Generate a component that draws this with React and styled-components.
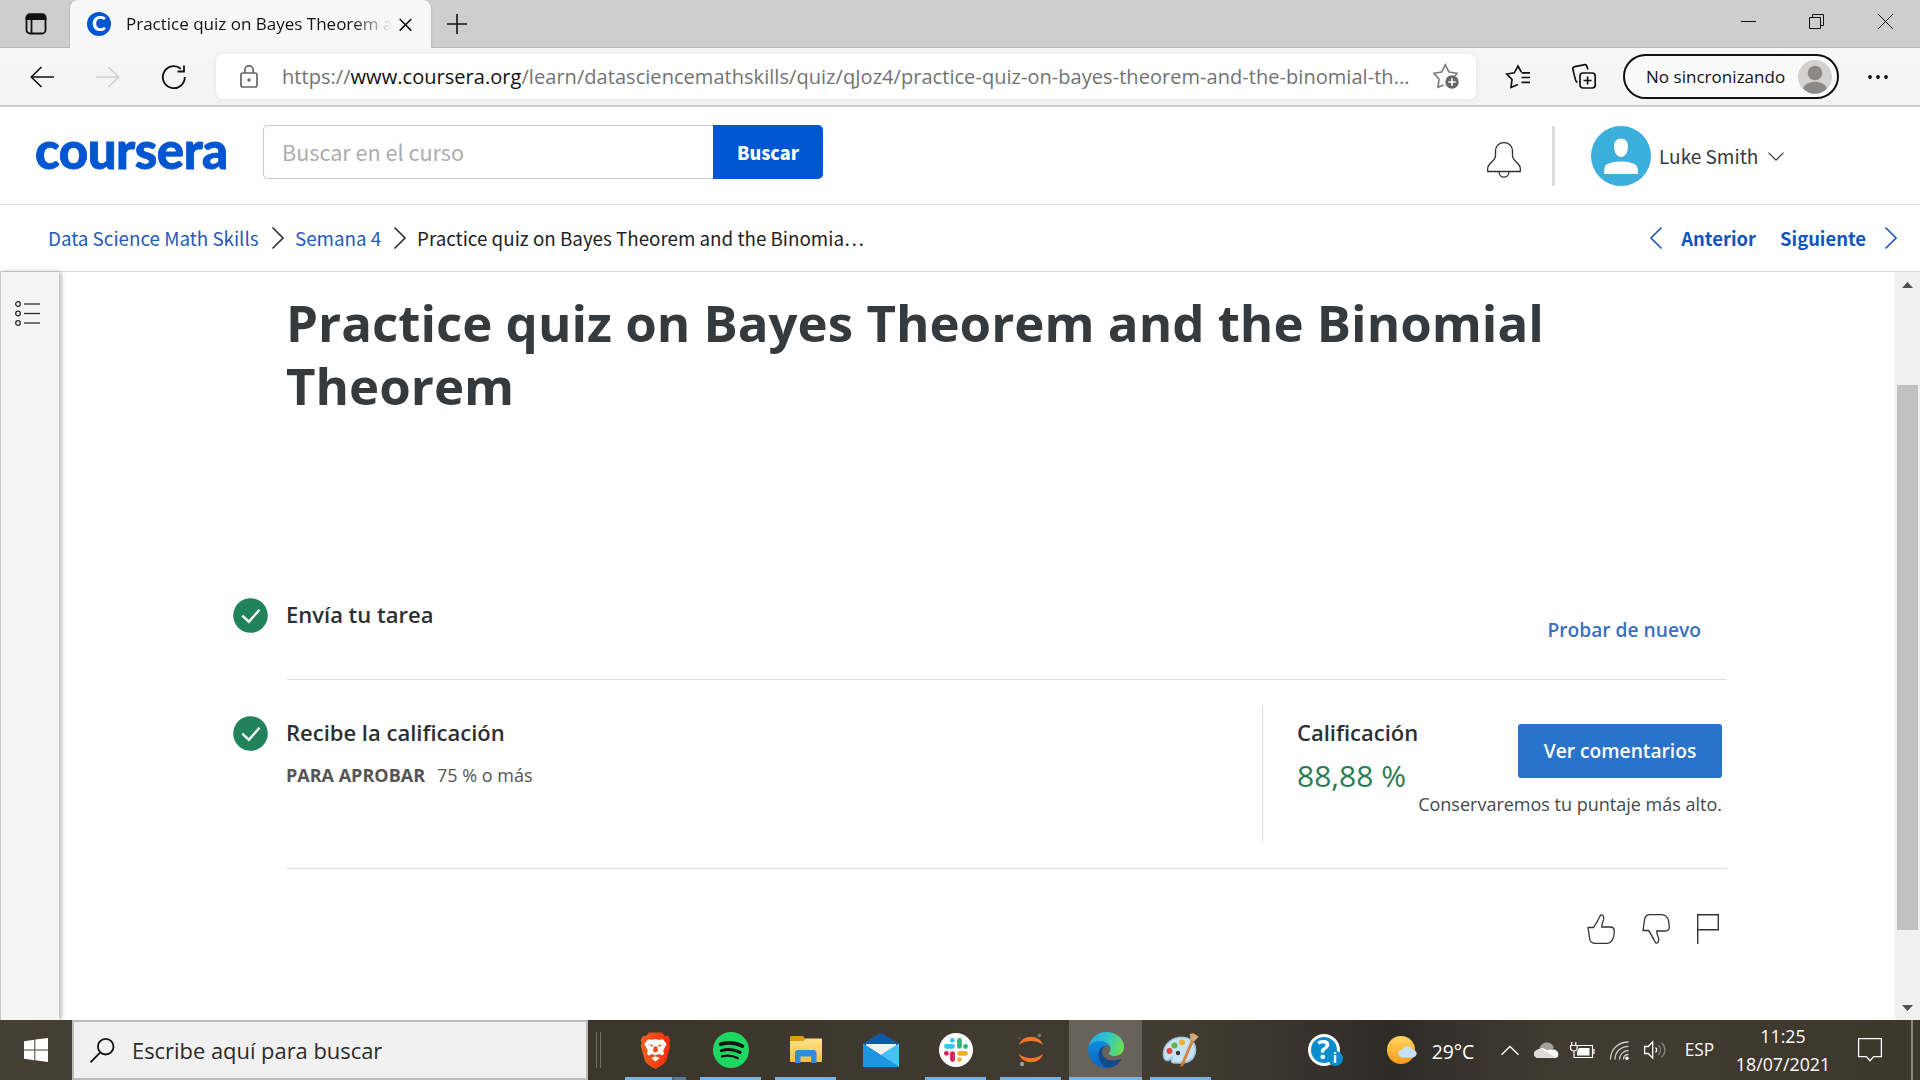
import React from "react";
import styled, { createGlobalStyle } from "styled-components";

const Global = createGlobalStyle`
  * { box-sizing: border-box; }
  html, body { margin: 0; padding: 0; overflow: hidden; background: #fff; }
  button { border: 0; background: none; padding: 0; font: inherit; color: inherit; }
`;

const ui = "'Open Sans', 'Noto Sans', sans-serif";
const source = "'Noto Sans CJK SC', 'Noto Sans', sans-serif";

const Screen = styled.div`
  width: 1920px;
  height: 1080px;
  display: flex;
  flex-direction: column;
  font-family: ${ui};
  white-space: nowrap;
  overflow: hidden;
`;

const Icon = styled.svg`
  display: block;
  flex: none;
  width: ${(p) => p.$w}px;
  height: ${(p) => p.$h || p.$w}px;
  fill: none;
  stroke: ${(p) => p.$c || "#1b1b1b"};
  stroke-width: ${(p) => p.$s || 1.6};
  overflow: visible;
`;

/* ---------- browser chrome ---------- */

const TabStrip = styled.div`
  flex: none;
  height: 48px;
  display: flex;
  background: #cecece;
  box-shadow: inset 0 -1px 0 #b8b8b8;
`;

const TabMenu = styled.button`
  width: 70px;
  padding-left: 2px;
  display: flex;
  align-items: center;
  justify-content: center;
`;

const Tab = styled.div`
  position: relative;
  width: 361px;
  height: 48px;
  padding-left: 17px;
  display: flex;
  align-items: center;
  background: #f7f7f7;
  border-radius: 8px 8px 0 0;
  box-shadow: 0 0 2px rgba(0, 0, 0, 0.25);
  clip-path: inset(-4px -4px 0 -4px);
`;

const Favicon = styled.span`
  flex: none;
  width: 24px;
  height: 24px;
  border-radius: 50%;
  background: #0056d2;
  color: #fff;
  font: 900 21px/22px Lato, sans-serif;
  text-align: center;
`;

const TabTitle = styled.span`
  width: 266px;
  margin-left: 15px;
  font-size: 17px;
  line-height: 24px;
  color: #111;
  mask-image: linear-gradient(to right, #000 226px, transparent 266px);
`;

const TabClose = styled.button`
  margin-left: 7px;
`;

const NewTab = styled.button`
  width: 52px;
  display: flex;
  align-items: center;
  justify-content: center;
`;

const WindowControls = styled.div`
  margin-left: auto;
  width: 206px;
  height: 43px;
  display: grid;
  grid-template-columns: repeat(3, 1fr);
  place-items: center;
`;

const Toolbar = styled.div`
  flex: none;
  height: 59px;
  padding: 0 3px 0 9px;
  display: flex;
  align-items: center;
  background: linear-gradient(#f7f7f7, #f3f3f3);
  border-bottom: 2px solid #cccccc;
`;

const ToolButton = styled.button`
  flex: none;
  width: ${(p) => p.$w || 66}px;
  height: 45px;
  display: flex;
  align-items: center;
  justify-content: center;
`;

const AddressBar = styled.div`
  flex: none;
  width: 1260px;
  height: 45px;
  margin: 0 9px;
  padding: 0 17px 0 24px;
  display: flex;
  align-items: center;
  background: #fff;
  border-radius: 7px;
  box-shadow: 0 0 7px rgba(0, 0, 0, 0.07);
`;

const Url = styled.span`
  flex: 1;
  margin-left: 24px;
  font-size: 20px;
  letter-spacing: 0.045px;
  color: #737373;
  b { font-weight: 400; color: #111; }
`;

const Profile = styled.button`
  flex: none;
  width: 216px;
  height: 45px;
  margin-left: 6px;
  padding: 0 5px 0 21px;
  display: flex;
  align-items: center;
  justify-content: space-between;
  border: 2px solid #111;
  border-radius: 23px;
  background: #fafafa;
  font-size: 17px;
  letter-spacing: 0.03px;
  color: #111;
`;

/* ---------- site header ---------- */

const Header = styled.header`
  flex: none;
  height: 98px;
  padding: 18px 136px 0 36px;
  display: flex;
  align-items: flex-start;
  background: #fff;
  border-bottom: 1px solid #dcdcdc;
  font-family: ${source};
`;

const Logo = styled.div`
  width: 227px;
  margin-left: -1px;
  padding-top: 1px;
  font: 900 51px/48px Lato, sans-serif;
  letter-spacing: -0.5px;
  -webkit-text-stroke: 0.8px #0056d2;
  color: #0056d2;
`;

const SearchForm = styled.div`
  display: flex;
  margin-left: 1px;
  height: 54px;
`;

const SearchInput = styled.div`
  width: 450px;
  padding-left: 18px;
  border: 1px solid #c9c9c9;
  border-right: 0;
  border-radius: 5px 0 0 5px;
  font-size: 21.6px;
  line-height: 52px;
  color: #adadad;
`;

const SearchButton = styled.button`
  width: 110px;
  border-radius: 0 5px 5px 0;
  background: #0056d2;
  color: #fff;
  font: 900 18px/52px ${source};
`;

const Account = styled.div`
  margin-left: auto;
  display: flex;
  align-items: center;
  height: 62px;
  font-size: 19px;
  color: #373a3c;
`;

const Rule = styled.span`
  width: 3px;
  height: 60px;
  margin: 0 36px 0 31px;
  background: #dedede;
`;

const UserName = styled.span`
  width: 109px;
  margin-left: 8px;
  padding-bottom: 2px;
`;

const Crumbs = styled.nav`
  flex: none;
  height: 67px;
  padding: 0 23px 1px 48px;
  display: flex;
  align-items: center;
  border-bottom: 1px solid #dcdcdc;
  font-family: ${source};
  font-size: 18.8px;
  color: #1f1f1f;
`;

const Crumb = styled.span`
  width: ${(p) => p.$w}px;
  line-height: 26px;
  color: ${(p) => (p.$link ? "#1f5bbd" : "#1f1f1f")};
`;

const CrumbArrow = styled.span`
  padding: 1px 11px 0 13px;
`;

const Pager = styled.div`
  margin-left: auto;
  display: flex;
  align-items: center;
  font-size: 18.4px;
  font-weight: 700;
  color: #0f55c0;
  svg { margin-top: 1px; }
`;

const PagerLink = styled.a`
  margin: 0 ${(p) => p.$r}px 0 ${(p) => p.$l}px;
  line-height: 26px;
`;

/* ---------- page body ---------- */

const Body = styled.div`
  flex: 1;
  min-height: 0;
  display: flex;
`;

const Sidebar = styled.aside`
  flex: none;
  width: 59px;
  padding: 29px 0 0 14px;
  border-left: 1px solid #c8c8c8;
  background: #f5f5f5;
  box-shadow: 2px 0 5px rgba(0, 0, 0, 0.32);
`;

const Main = styled.main`
  flex: 1;
  padding: 19px 168px 0 228px;
  color: #373a3c;
`;

const Title = styled.h1`
  margin: 0 0 0 -1px;
  font-size: 51px;
  line-height: 63px;
  font-weight: 700;
  letter-spacing: 0.01px;
  white-space: normal;
  width: 1400px;
  color: #373a3c;
`;

const Step = styled.section`
  height: ${(p) => p.$h}px;
  padding-top: ${(p) => p.$top}px;
  display: flex;
  border-bottom: 1px solid #dedede;
`;

const StepMark = styled.span`
  flex: none;
  margin: ${(p) => p.$top}px 0 0 -54px;
  width: 53px;
`;

const StepHead = styled.div`
  padding-top: ${(p) => p.$drop || 0}px;
  font-size: 22px;
  line-height: 40px;
  font-weight: 600;
  color: #2d3033;
`;

const StepBody = styled.div`
  flex: 1;
`;

const Passing = styled.div`
  display: flex;
  gap: 12px;
  margin-top: 13px;
  font-size: 18px;
  line-height: 20px;
  color: #555;
`;

const Retry = styled.a`
  margin: 22px 26px 0 0;
  height: 28px;
  font-size: 19.2px;
  line-height: 28px;
  font-weight: 600;
  color: #3a70c0;
`;

const Result = styled.div`
  width: 465px;
  height: 135px;
  padding: 6px 5px 0 34px;
  display: flex;
  justify-content: space-between;
  border-left: 1px solid #d8d8d8;
`;

const Grade = styled.div`
  width: 120px;
`;

const Score = styled.div`
  padding-top: 2px;
  font-size: 30px;
  line-height: 44px;
  color: #2b7d55;
`;

const Actions = styled.div`
  display: flex;
  flex-direction: column;
  align-items: flex-end;
  padding-top: 12px;
`;

const Primary = styled.button`
  width: 204px;
  height: 54px;
  padding-bottom: 2px;
  border-radius: 3px;
  background: #2a73cc;
  color: #fff;
  font-size: 19.2px;
  font-weight: 600;
`;

const Note = styled.div`
  width: 304px;
  margin-top: 12px;
  text-align: right;
  font-size: 18px;
  line-height: 28px;
  color: #45484b;
`;

const Feedback = styled.div`
  display: flex;
  justify-content: flex-end;
  gap: 27px;
  padding: 45px 8px 0 0;
`;

const Scrollbar = styled.div`
  flex: none;
  width: 25px;
  padding: 10px 2px 9px;
  display: flex;
  flex-direction: column;
  align-items: center;
  background: #f0f0f0;
`;

const Thumb = styled.div`
  width: 21px;
  height: 545px;
  margin: 97px 0 auto;
  background: #c1c1c1;
`;

/* ---------- taskbar ---------- */

const Taskbar = styled.footer`
  flex: none;
  height: 60px;
  display: flex;
  color: #fff;
  background: linear-gradient(90deg, #463f34 0, #3b352c 620px, #423c31 1180px, #2f2c28 1390px, #413b31 1560px, #3d372c 1920px);
`;

const Start = styled.button`
  width: 72px;
  display: flex;
  align-items: center;
  justify-content: center;
`;

const TaskSearch = styled.div`
  width: 516px;
  padding: 0 0 0 16px;
  display: flex;
  align-items: center;
  gap: 17px;
  border: 2px solid #bcbcbc;
  background: #f1f1f1;
  color: #2b2b2b;
  font-size: 21.9px;
  span { padding-top: 1px; }
`;

const Grip = styled.div`
  width: 31px;
  display: flex;
  align-items: center;
  gap: 3px;
  padding-left: 8px;
`;

const GripLine = styled.i`
  width: 1px;
  height: 36px;
  background: #746e66;
`;

const Apps = styled.div`
  display: flex;
  gap: 2px;
`;

const AppButton = styled.button`
  width: 73px;
  height: 60px;
  display: flex;
  flex-direction: column;
  align-items: center;
  background: ${(p) => (p.$active ? "#68625b" : "transparent")};
`;

const AppGlyph = styled.span`
  flex: 1;
  display: flex;
  align-items: center;
  padding-top: 3px;
`;

const Underline = styled.i`
  width: ${(p) => (p.$active ? 73 : 61)}px;
  height: 3px;
  background: ${(p) =>
    p.$split
      ? "linear-gradient(90deg, #7ab4e2 47px, #4a6a84 47px, #4a6a84 49px, #567b98 49px)"
      : p.$idle ? "transparent" : "#7ab4e2"};
`;

const Tray = styled.div`
  margin-left: auto;
  width: 631px;
  display: flex;
  align-items: center;
`;

const TrayItem = styled.div`
  flex: none;
  width: ${(p) => p.$w}px;
  margin-left: ${(p) => p.$gap || 0}px;
  padding-top: ${(p) => p.$drop || 0}px;
  display: flex;
  justify-content: center;
  text-align: center;
  font-size: ${(p) => p.$size || 17.3}px;
  line-height: 28px;
`;

const Clock = styled(TrayItem)`
  flex-direction: column;
  font-size: 17.8px;
`;

const DesktopEdge = styled.i`
  width: 2px;
  height: 60px;
  margin-left: 10px;
  background: #8c877f;
`;

const Check = () => (
  <Icon $w={35} viewBox="0 0 35 35" $c="none">
    <circle cx="17.5" cy="17.5" r="17.3" fill="#21835a" />
    <path d="M9.3 17.6l6.6 6.2L26.5 11.8" stroke="#fff" strokeWidth="2.4" />
  </Icon>
);

const thumbPath = "M1 13.5h5.5C9 10 11 6 13.3 1.6c.6-1.1 2.2-.8 3 .5.9 1.5.5 3.500-.3 5.500-.8 2-1.300 3.400-1.300 5.400h8.300c2.500 0 4.300 1.700 4.300 4 0 7.500-2.600 11.800-7 12.400H8.500C5 29.400 3 28 2.600 24.500z";

const bars = (y) => (
  <g key={y}>
    <circle cx="3" cy={y} r="2.300" />
    <path d={`M9 ${y}H25`} />
  </g>
);

const Brave = () => (
  <Icon $w={31} $h={37} viewBox="0 0 31 37" $c="none">
    <defs>
      <linearGradient id="brave"><stop offset="0" stopColor="#f1601f" /><stop offset="1" stopColor="#fb2a08" /></linearGradient>
    </defs>
    <path d="M9 0.500h13l3 3.500 3-.3 2.300 4.300-1 3 .9 3-4 14.500c-1 3-6 6-10.700 8.500C10.800 34.500 5.800 31.500 4.800 28.500L.8 14l.9-3-1-3L3 3.700l3 .3z" fill="url(#brave)" />
    <path d="M8 7.200l4 .6 3.500-.8 3.500.8 4-.6 3.600 4.800-3.400 6.500.9 3-1.900 2-3.200-1.500-3.500 1.500-3.500-1.500L8.800 23.500l-1.900-2 .9-3L4.400 12z" fill="#fff" />
    <path d="M8.500 12.300l4.500.7-.8 1.900zM22.500 12.300L18 13l.8 1.900zM14 14.500l-1.200 4.500 2.700 1.600 2.700-1.600-1.200-4.500z" fill="#f44a16" />
    <path d="M11.200 26l4.300-1.800 4.300 1.800-4.300 3.400z" fill="#fff" />
  </Icon>
);

const Spotify = () => (
  <Icon $w={36} viewBox="0 0 36 36" $c="#111">
    <circle cx="18" cy="18" r="18" fill="#1ed760" stroke="none" />
    <g strokeLinecap="round">
      <path d="M7.500 12.200c8-2.200 15.500-1.500 22 2" strokeWidth="3.600" />
      <path d="M8.300 18.600c6.800-1.900 13-1.200 18.800 1.800" strokeWidth="3" />
      <path d="M9 24.400c5.800-1.400 11-.8 15.700 1.700" strokeWidth="2.400" />
    </g>
  </Icon>
);

const Folder = () => (
  <Icon $w={32} $h={28} viewBox="0 0 32 28" $c="none">
    <defs>
      <linearGradient id="folder" x2="0" y2="1"><stop offset="0" stopColor="#ffe08a" /><stop offset="1" stopColor="#f5c242" /></linearGradient>
    </defs>
    <path d="M0 1.500C0 .6.600 0 1.500 0H13l2.500 3H31v8H0z" fill="#d9a012" />
    <path d="M0 5h13l3-2.500h15c.6 0 1 .4 1 1V25c0 .6-.4 1-1 1H1c-.6 0-1-.4-1-1z" fill="url(#folder)" />
    <path d="M5 27V17c0-1.600 1-3 3-3h15.500c2 0 3 1.400 3 3v10H21v-6.500H10.500V27z" fill="#2f8fdc" />
  </Icon>
);

const Mail = () => (
  <Icon $w={36} $h={34} viewBox="0 0 36 34" $c="none">
    <path d="M0 10.500L15.500 1c1.600-1 3.400-1 5 0L36 10.500V14H0z" fill="#0f5aa8" />
    <path d="M3 11h30v13H3z" fill="#f1f1f1" />
    <path d="M0 10.500L18 22 36 10.500V34H0z" fill="#1d93e0" />
    <path d="M36 10.500V34L18 22z" fill="#45c3f5" />
    <path d="M0 10.500L36 34H0z" fill="#1c95e2" />
  </Icon>
);

const Slack = () => (
  <Icon $w={34} viewBox="0 0 34 34" $c="none">
    <circle cx="17" cy="17" r="17" fill="#fff" />
    <g strokeLinecap="round" strokeWidth="4.800">
      <path d="M13.300 7.300v.01" stroke="#36c5f0" /><path d="M7.500 13.300h6" stroke="#36c5f0" />
      <path d="M20.500 7.300v6" stroke="#2eb67d" /><path d="M26.500 13.500v.01" stroke="#2eb67d" />
      <path d="M26.500 20.300h-6" stroke="#ecb22e" /><path d="M20.500 26.600v.01" stroke="#ecb22e" />
      <path d="M13.500 26.600v-6" stroke="#e01e5a" /><path d="M7.400 20.300v.01" stroke="#e01e5a" />
    </g>
  </Icon>
);

const Jupyter = () => (
  <Icon $w={26} $h={34} viewBox="0 0 26 34" $c="none">
    <path d="M1 12C4 1 22 1 25 12 19 6.500 7 6.500 1 12zM1 21c3 11 21 11 24 0-6 5.500-18 5.500-24 0z" fill="#f37726" />
    <circle cx="21.500" cy="2.500" r="1.800" fill="#767677" />
    <circle cx="1.500" cy="5.300" r="1.100" fill="#616262" />
    <circle cx="4" cy="31" r="2.200" fill="#9e9e9e" />
  </Icon>
);

const Edge = () => (
  <Icon $w={36} viewBox="0 0 36 36" $c="none">
    <defs>
      <linearGradient id="edgeTop" x1="0" y1="0.3" x2="1" y2="0.5"><stop offset="0" stopColor="#2aa6e6" /><stop offset=".5" stopColor="#2fc4cf" /><stop offset="1" stopColor="#6be04c" /></linearGradient>
      <linearGradient id="edgeLow" x2="0" y2="1"><stop offset="0" stopColor="#0d8ee0" /><stop offset="1" stopColor="#0c62bd" /></linearGradient>
    </defs>
    <path d="M0.500 15.500C2 6 9 0 18.500 0 29 0 36 7 36 15c0 5.500-4 9-9 9-3.500 0-6-1.200-6-2.800 0-1 1.500-1.700 1.500-4.200 0-4-5-8-10-8-6 0-10.500 3-12 6.500z" fill="url(#edgeTop)" />
    <path d="M0.300 16C2 11 7 9 12 9c6 0 10.300 4 10.300 8 0-2-2-3.500-4-3.500-4 0-7 4.500-7 9.500 0 6 4.500 11 10 12.500-1 .3-2.200.5-3.500.5C8 36-.7 27 .3 16z" fill="url(#edgeLow)" />
    <path d="M18 14c-2.500 0-4 3-4 6 0 5 5 8.500 11 8.500 4 0 6.500-1.500 7.500-1.800.8-.2 1 .4.700 1C31 32 26 35.500 21 35.500c-5.500 0-10.500-6-10.500-12.500 0-4.500 3-9.500 7.500-9z" fill="#114a8b" />
  </Icon>
);

const Paint = () => (
  <Icon $w={36} $h={36} viewBox="0 0 36 36" $c="none">
    <path d="M16 5.500c9-1.500 16.500 3.500 16.500 12C32.500 26 27 31 18 31c-4 0-7 0-8.500-.5-1.500-.6-1-3-.5-5-2 .2-1.500 3-4.500 3C1.500 28.500.500 25 .5 22 .5 13 7 7 16 5.500z" fill="#c6e2f5" stroke="#9fc4de" />
    <circle cx="6.500" cy="19" r="3" fill="#e0453c" /><circle cx="11.500" cy="13.500" r="3" fill="#65b548" />
    <circle cx="19" cy="10.500" r="3" fill="#f3b12f" /><circle cx="15" cy="21" r="2.200" fill="#34383c" />
    <path d="M28.500 8L30.500 9 19.500 34.500 17.500 34z" fill="#e88b34" stroke="#b5642a" strokeWidth=".6" />
    <path d="M26.500 2l4-.8 3 2 2.200 1.500L31 9.500l-3-1.300z" fill="#d3a874" />
  </Icon>
);

const apps = [
  { id: "brave", Glyph: Brave, split: true },
  { id: "spotify", Glyph: Spotify },
  { id: "explorer", Glyph: Folder },
  { id: "mail", Glyph: Mail, idle: true },
  { id: "slack", Glyph: Slack },
  { id: "jupyter", Glyph: Jupyter },
  { id: "edge", Glyph: Edge, active: true },
  { id: "paint", Glyph: Paint },
];

function Browser() {
  return (
    <>
      <TabStrip>
        <TabMenu>
          <Icon $w={22} $h={22} viewBox="0 0 22 22" $c="#111" $s={1.8}>
            <rect x="1.500" y="1.500" width="19" height="19" rx="3.500" />
            <path d="M1.500 6V4.500a3 3 0 013-3h13a3 3 0 013 3V6z" fill="#111" />
            <path d="M6.500 6v14" />
          </Icon>
        </TabMenu>
        <Tab>
          <Favicon>C</Favicon>
          <TabTitle>Practice quiz on Bayes Theorem a</TabTitle>
          <TabClose>
            <Icon $w={13} viewBox="0 0 13 13" $c="#111"><path d="M.7 1l11.600 11.600M12.300 1L.7 12.600" /></Icon>
          </TabClose>
        </Tab>
        <NewTab>
          <Icon $w={20} viewBox="0 0 20 20" $c="#111"><path d="M10 0v20M0 10h20" /></Icon>
        </NewTab>
        <WindowControls>
          <Icon $w={15} viewBox="0 0 15 15" $c="#111" $s={1}><path d="M0 7.500h15" /></Icon>
          <Icon $w={15} viewBox="0 0 15 15" $c="#111" $s={1}><path d="M.5 3.500h11v11H.5zM3.500 3.500v-3h11v11h-3" /></Icon>
          <Icon $w={15} viewBox="0 0 15 15" $c="#111" $s={1}><path d="M0 0l15 15M15 0L0 15" /></Icon>
        </WindowControls>
      </TabStrip>
      <Toolbar>
        <ToolButton>
          <Icon $w={24} $h={22} viewBox="0 0 24 22" $c="#111"><path d="M24 11H1.500M11.500 1L1.300 11l10.200 10" /></Icon>
        </ToolButton>
        <ToolButton>
          <Icon $w={24} $h={22} viewBox="0 0 24 22" $c="#d0d0d0"><path d="M0 11h22.500M12.500 1l10.200 10-10.200 10" /></Icon>
        </ToolButton>
        <ToolButton>
          <Icon $w={24} $h={24} viewBox="0 0 24 24" $c="#111" $s={1.8}><path d="M22.800 12A11 11 0 1 1 18.800 3.700M22 0.500v6h-6.500" /></Icon>
        </ToolButton>
        <AddressBar>
          <Icon $w={18} $h={23} viewBox="0 0 18 23" $c="#666" $s={1.700}>
            <rect x="1" y="8" width="16" height="14" rx="2" /><path d="M4.800 8V5a4.200 4.200 0 018.400 0v3" /><circle cx="9" cy="15" r=".8" fill="#666" />
          </Icon>
          <Url>https://<b>www.coursera.org</b>/learn/datasciencemathskills/quiz/qJoz4/practice-quiz-on-bayes-theorem-and-the-binomial-th...</Url>
          <Icon $w={26} $h={25} viewBox="0 0 26 25" $c="#777">
            <path d="M10.500 21L5 23.300 6 15 1 9.300 8.700 8 12.300.8 16 8l8 1.300-2 2.500" />
            <circle cx="19" cy="18" r="6.700" fill="#666" stroke="none" /><path d="M19 14.300v7.400M15.300 18h7.400" stroke="#fff" strokeWidth="1.700" />
          </Icon>
        </AddressBar>
        <ToolButton>
          <Icon $w={24} $h={23} viewBox="0 0 24 23" $c="#111" $s={1.700}>
            <path d="M12 19.500L5 22.500 6 14.500 .8 9 8.300 7.800 12 1l3.300 6M15.500 7.800H24M15.500 12.500H24M15.500 17.300H24" />
          </Icon>
        </ToolButton>
        <ToolButton>
          <Icon $w={24} $h={25} viewBox="0 0 24 25" $c="#111" $s={1.700}>
            <rect x="8" y="9" width="15.200" height="15" rx="3" /><path d="M15.600 12.500v8M11.600 16.500h8M5.500 18.500c-1.200-.6-1.700-1.500-2-2.600L.9 5.600c-.3-1.300.3-2.500 1.600-2.900L12 .8c1.400-.3 2.600.4 3 1.700l.8 3" />
          </Icon>
        </ToolButton>
        <Profile>
          No sincronizando
          <Icon $w={34} viewBox="0 0 34 34" $c="none">
            <circle cx="17" cy="17" r="17" fill="#d3d2d0" /><circle cx="17" cy="13" r="7.300" fill="#8b8988" />
            <path d="M5 28.500C8 19.500 26 19.500 29 28.500 22 35.500 12 35.500 5 28.500z" fill="#8b8988" />
          </Icon>
        </Profile>
        <ToolButton $w={78}>
          <Icon $w={20} $h={4} viewBox="0 0 20 4" $c="none">
            <g fill="#111"><circle cx="2" cy="2" r="1.900" /><circle cx="10" cy="2" r="1.900" /><circle cx="18" cy="2" r="1.900" /></g>
          </Icon>
        </ToolButton>
      </Toolbar>
    </>
  );
}

function SiteHeader() {
  const chevron = (dir, c) => (
    <Icon $w={12} $h={22} viewBox="0 0 12 22" $c={c} $s={1.700}>
      <path d={dir === "left" ? "M11.500.5L1 11l10.500 10.500" : "M.5.5L11 11 .5 21.500"} />
    </Icon>
  );
  return (
    <>
      <Header>
        <Logo>coursera</Logo>
        <SearchForm>
          <SearchInput>Buscar en el curso</SearchInput>
          <SearchButton>Buscar</SearchButton>
        </SearchForm>
        <Account>
          <Icon $w={34} $h={36} viewBox="0 0 34 36" $c="#333" $s={1.300} transform="translate(0 4)">
            <path d="M17 .7c5 0 8.500 3.500 8.500 8v5c0 5 7.800 8 7.800 12.500v3.300H.7v-3.300c0-4.500 7.800-7.500 7.800-12.500v-5c0-4.500 3.500-8 8.500-8zM12 29.500c0 7.500 10 7.500 10 0" />
          </Icon>
          <Rule />
          <Icon $w={60} viewBox="0 0 60 60" $c="none">
            <circle cx="30" cy="30" r="30" fill="#3baedb" />
            <path d="M30 12.500c4.500 0 7 3 7 8 0 6-3 10.500-7 10.500s-7-4.500-7-10.500c0-5 2.500-8 7-8zM13 48c.2-4 .5-6.500 1.500-8.500C17 37 24 35.500 30 35.500s13 1.500 15.500 4c1 2 1.500 4.500 1.700 8.500z" fill="#fff" />
          </Icon>
          <UserName>Luke Smith</UserName>
          <Icon $w={16} $h={9} viewBox="0 0 16 9" $c="#333" $s={1.200}><path d="M.5.7L8 8.200 15.500.7" /></Icon>
        </Account>
      </Header>
      <Crumbs>
        <Crumb $link $w={211}>Data Science Math Skills</Crumb>
        <CrumbArrow>{chevron("right", "#333")}</CrumbArrow>
        <Crumb $link $w={86}>Semana 4</Crumb>
        <CrumbArrow>{chevron("right", "#333")}</CrumbArrow>
        <Crumb $w={450}>Practice quiz on Bayes Theorem and the Binomia…</Crumb>
        <Pager>
          {chevron("left", "#1f5bbd")}
          <PagerLink $l={19} $r={12}>Anterior</PagerLink>
          <PagerLink $l={12} $r={19}>Siguiente</PagerLink>
          {chevron("right", "#1f5bbd")}
        </Pager>
      </Crumbs>
    </>
  );
}

function Quiz() {
  return (
    <Body>
      <Sidebar>
        <Icon $w={26} $h={26} viewBox="0 0 26 26" $c="#2b2b2b" $s={1.300}>{[3, 12.500, 22].map(bars)}</Icon>
      </Sidebar>
      <Main>
        <Title>Practice quiz on Bayes Theorem and the Binomial Theorem</Title>
        <Step $h={263} $top={177}>
          <StepMark $top={4}><Check /></StepMark>
          <StepBody><StepHead>Envía tu tarea</StepHead></StepBody>
          <Retry>Probar de nuevo</Retry>
        </Step>
        <Step $h={189} $top={26}>
          <StepMark $top={10}><Check /></StepMark>
          <StepBody>
            <StepHead $drop={6}>Recibe la calificación</StepHead>
            <Passing><b>PARA APROBAR</b><span>75 % o más</span></Passing>
          </StepBody>
          <Result>
            <Grade>
              <StepHead>Calificación</StepHead>
              <Score>88,88 %</Score>
            </Grade>
            <Actions>
              <Primary>Ver comentarios</Primary>
              <Note>Conservaremos tu puntaje más alto.</Note>
            </Actions>
          </Result>
        </Step>
        <Feedback>
          <Icon $w={28} $h={30} viewBox="0 0 28 30" $c="#333" $s={1.300}><path d={thumbPath} /></Icon>
          <Icon $w={28} $h={30} viewBox="0 0 28 30" $c="#333" $s={1.300}><path d={thumbPath} transform="matrix(1 0 0 -1 0 30)" /></Icon>
          <Icon $w={22} $h={30} viewBox="0 0 22 30" $c="#333" $s={1.400}><path d="M.7 30V.7h20.600v15H.7" /></Icon>
        </Feedback>
      </Main>
      <Scrollbar>
        <Icon $w={11} $h={6} viewBox="0 0 11 6" $c="none"><path d="M0 6L5.500 0 11 6z" fill="#505050" /></Icon>
        <Thumb />
        <Icon $w={11} $h={6} viewBox="0 0 11 6" $c="none"><path d="M0 0l5.500 6L11 0z" fill="#505050" /></Icon>
      </Scrollbar>
    </Body>
  );
}

const HelpGlyph = styled.span`
  position: relative;
  width: 32px;
  height: 32px;
  border: 3px solid #fff;
  border-radius: 50%;
  background: #0b8ccc;
  font: 700 26px/25px ${ui};
  text-align: center;
`;

const InfoBadge = styled.span`
  position: absolute;
  right: -6px;
  bottom: -3px;
  width: 15px;
  height: 15px;
  border-radius: 50%;
  background: #0b8ccc;
  font: 700 14px/14px ${ui};
`;

function WindowsBar() {
  return (
    <Taskbar>
      <Start>
        <Icon $w={24} viewBox="0 0 24 24" $c="none"><path d="M0 3.300l10.300-1.500v9.700H0zM11.300 1.600L24 0v11.500H11.300zM0 12.500h10.300v9.700L0 20.700zM11.300 12.500H24V24l-12.700-1.700z" fill="#fff" /></Icon>
      </Start>
      <TaskSearch>
        <Icon $w={25} viewBox="0 0 25 25" $c="#111" $s={1.800}><circle cx="15.700" cy="8.700" r="7.800" /><path d="M10.300 14.300L.5 24.300" /></Icon>
        <span>Escribe aquí para buscar</span>
      </TaskSearch>
      <Grip><GripLine /><GripLine /></Grip>
      <Apps>
        {apps.map(({ id, Glyph, active, idle, split }) => (
          <AppButton key={id} $active={active}>
            <AppGlyph><Glyph /></AppGlyph>
            <Underline $active={active} $idle={idle} $split={split} />
          </AppButton>
        ))}
      </Apps>
      <Tray>
        <TrayItem $w={69}><HelpGlyph>?<InfoBadge>i</InfoBadge></HelpGlyph></TrayItem>
        <TrayItem $w={44} $gap={22}>
          <Icon $w={30} $h={28} viewBox="0 0 30 28" $c="none">
            <defs><linearGradient id="sun" x2="0" y2="1"><stop offset="0" stopColor="#ffd75e" /><stop offset="1" stopColor="#f79a1b" /></linearGradient></defs>
            <circle cx="14" cy="14" r="14" fill="url(#sun)" />
            <path d="M16 21.500c-6 0-6-7.500-.5-8 1.500-4.500 8-4.500 9.500 0 6.500.500 6 8 0 8z" fill="#c4e3fb" />
          </Icon>
        </TrayItem>
        <TrayItem $w={58} $size={19.400} $drop={4}>29°C</TrayItem>
        <TrayItem $w={36} $gap={10}><Icon $w={18} $h={9} viewBox="0 0 18 9" $c="#fff" $s={1.300}><path d="M.5 8.700L9 .5l8.500 8.200" /></Icon></TrayItem>
        <TrayItem $w={36}>
          <Icon $w={25} $h={16} viewBox="0 0 25 16" $c="none">
            <path d="M5 8c1-9 13-10 15-2L12 12z" fill="#a3a09b" />
            <path d="M4.500 16c-6 0-6-7.500 0-8 2-2.500 5.500-2.500 8 0L18 7.500c7-1 9 8.500 2.500 8.500z" fill="#fff" />
            <path d="M0 12c0-5 7.500-6.500 11-3.300L22 15.500 4.500 16C2 16 0 14.500 0 12z" fill="#dedcda" />
          </Icon>
        </TrayItem>
        <TrayItem $w={36}>
          <Icon $w={24} $h={17} viewBox="0 0 24 17" $c="#fff" $s={1.200}>
            <path d="M8 3.500h14.500v12H4V9M24 7v5M1.700 0v3.500M5.800 0v3.500M.5 3.500h6.700v2.300C7.200 8 5.700 9 4 9S.5 8 .5 5.800z" /><path d="M7 13.500V10l2-4h10.500v7.500z" fill="#fff" stroke="none" />
          </Icon>
        </TrayItem>
        <TrayItem $w={35} $gap={2}>
          <Icon $w={19} $h={19} viewBox="0 0 19 19" $c="#cfccc8" $s={1.300}>
            <path d="M.5 18.500C.5 8.500 8 1 18.500 1M5 18.500C5 11 11 5.300 18.500 5.300M9.500 18.500c0-5 4-9 9-9M13.500 18.500c0-3 2-5 5-5" /><circle cx="17" cy="17.200" r="1.700" fill="#fff" stroke="none" />
          </Icon>
        </TrayItem>
        <TrayItem $w={35}>
          <Icon $w={22} $h={18} viewBox="0 0 22 18" $c="#fff" $s={1.300}>
            <path d="M.6 5.500h3.700L8.700.8v16.400l-4.400-4.700H.6zM11.500 6.500c1.500 1.500 1.500 3.500 0 5" /><path d="M14.300 4c3 3 3 7 0 10M17.500 1.500c4.500 4.500 4.500 10.500 0 15" stroke="#8a857d" />
          </Icon>
        </TrayItem>
        <TrayItem $w={55}>ESP</TrayItem>
        <Clock $w={112}><span>11:25</span><span>18/07/2021</span></Clock>
        <TrayItem $w={62}>
          <Icon $w={24} $h={24} viewBox="0 0 24 24" $c="#fff" $s={1.300}><path d="M.6.600h22.800v18h-7.700L12 22.800l-3.700-4.200H.6z" /></Icon>
        </TrayItem>
        <DesktopEdge />
      </Tray>
    </Taskbar>
  );
}

export default function App() {
  return (
    <Screen>
      <Global />
      <Browser />
      <SiteHeader />
      <Quiz />
      <WindowsBar />
    </Screen>
  );
}
